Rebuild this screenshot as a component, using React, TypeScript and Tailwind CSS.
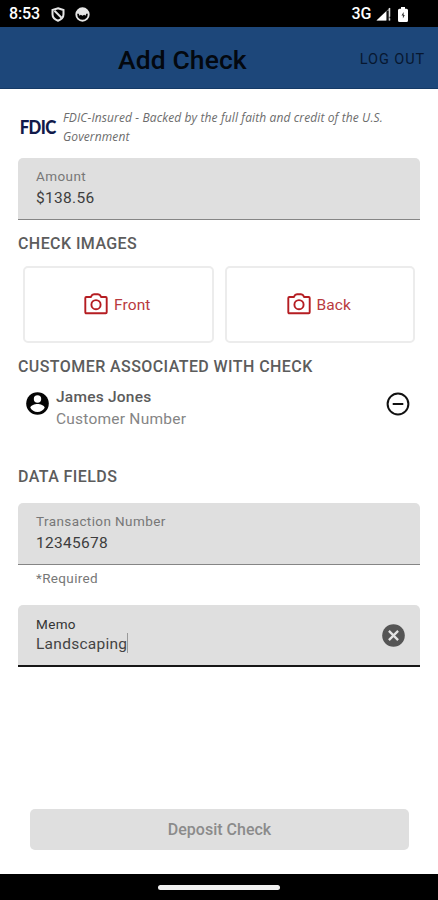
import type { ReactNode } from "react";

function ShieldIcon() {
  return (
    <svg className="h-[15px] w-[14px]" viewBox="0 0 14 15" fill="none" stroke="#e6e6e6" strokeWidth="2">
      <path d="M7 1.2 12.5 3v4.3c0 3-2.2 5.2-5.5 6.5-3.300-1.300-5.500-3.500-5.500-6.500V3z" />
      <path d="m3.500 3.800 7 7" />
    </svg>
  );
}

function FaceIcon() {
  return (
    <svg className="h-[15px] w-[15px]" viewBox="0 0 15 15">
      <circle cx="7.500" cy="7.500" r="6.200" fill="none" stroke="#e6e6e6" strokeWidth="1.900" />
      <path d="M1.500 6.500C2 3 4.500 1.300 7.500 1.300s5.500 1.700 6 5.200l-2.200.3-.8 1.900-1.300-.9-1.700 1-1.700-1-1.300.9-.8-1.900z" fill="#e6e6e6" />
    </svg>
  );
}

function SignalIcon() {
  return (
    <svg className="h-[14px] w-[15px]" viewBox="0 0 15 14">
      <path d="M.5 13.500 14 .5v13z" fill="#777" />
      <path d="M.5 13.500 10 4.400v9.100z" fill="#fff" />
      <path d="M13.500 1v8.700M13.500 11.300v2.200" stroke="#ddd" strokeWidth="1.500" />
      <path d="M11.800 4v10" stroke="#000" strokeWidth="1.300" />
    </svg>
  );
}

function BatteryIcon() {
  return (
    <svg className="h-[15px] w-[10px]" viewBox="0 0 10 15">
      <path d="M3 0h4v1.700h1.500q1.500 0 1.500 1.500v10.300q0 1.500-1.500 1.500h-7Q0 15 0 13.500V3.200q0-1.500 1.500-1.500H3z" fill="#fff" />
      <path d="M5.600 5 3.500 8.600h1.400v2.900l1.900-3.600H5.600z" fill="#333" />
    </svg>
  );
}

function CameraIcon() {
  return (
    <svg className="h-[22px] w-[24px] shrink-0" viewBox="0 0 24 22" fill="none" stroke="#b51d22" strokeWidth="1.900" strokeLinejoin="round">
      <path d="M2.300 4h4.500q1.300-2.700 3.200-2.700h4q1.900 0 3.200 2.700h4.500q1 0 1 1v14.300q0 1-1 1H2.300q-1 0-1-1V5q0-1 1-1z" />
      <circle cx="12" cy="11.700" r="4.600" />
    </svg>
  );
}

function PersonIcon() {
  return (
    <svg className="h-[23px] w-[23px] shrink-0" viewBox="0 0 23 23">
      <circle cx="11.500" cy="11.500" r="11.300" fill="#050505" />
      <circle cx="11.500" cy="7" r="3.700" fill="#fff" />
      <path d="M4.300 15.800c.6-2.500 4.300-3.700 7.200-3.700s6.600 1.200 7.200 3.700c-1.400 2.500-4 4.300-7.200 4.300s-5.800-1.800-7.200-4.300z" fill="#fff" />
    </svg>
  );
}

function MinusIcon() {
  return (
    <svg className="h-[24px] w-[24px]" viewBox="0 0 24 24" fill="none" stroke="#111" strokeWidth="2">
      <circle cx="12" cy="12" r="10.400" />
      <path d="M6.700 12h10.600" />
    </svg>
  );
}

function ClearIcon() {
  return (
    <svg className="h-[23px] w-[23px]" viewBox="0 0 23 23">
      <circle cx="11.500" cy="11.500" r="11.300" fill="#555" />
      <path d="m6.900 6.900 9.200 9.200m0-9.200-9.200 9.200" stroke="#e4e4e4" strokeWidth="2.300" />
    </svg>
  );
}

function CheckSide({ label }: { label: string }) {
  return (
    <button className="flex h-[77px] flex-1 items-center justify-center gap-[6px] rounded-[5px] border-2 border-[#ececec] pr-[2px] pb-px text-[15.5px] leading-5 tracking-[0.1px] text-[#b93a3e]">
      <CameraIcon />
      <span className="pt-[2px]">{label}</span>
    </button>
  );
}

function Heading({ children, className }: { children: ReactNode; className: string }) {
  return <h2 className={"whitespace-nowrap text-[16px] leading-5 font-medium tracking-[0.420px] text-[#5c5c5c] " + className}>{children}</h2>;
}

function FilledField({ label, value, className }: { label: string; value: string; className: string }) {
  return (
    <div className={"flex h-[62px] flex-col rounded-t-[5px] border-b border-[#858585] bg-[#dfdfdf] px-[18px] pt-[8px] " + className}>
      <label className="text-[13.5px] leading-5 tracking-[0.400px] text-[#777]">{label}</label>
      <span className="pt-px text-[15.5px] leading-[23px] tracking-[0.300px] text-[#3d3d3d]">{value}</span>
    </div>
  );
}

export default function App() {
  return (
    <div className="flex h-[900px] w-[438px] flex-col overflow-hidden bg-white font-['Roboto',sans-serif]">
      <div className="flex h-[27px] shrink-0 items-center bg-black pt-px pr-[30px] pl-[9px] text-white">
        <span className="w-[42px] text-[16px] leading-none font-medium tracking-[-0.1px]">8:53</span>
        <div className="flex gap-[10px]">
          <ShieldIcon />
          <FaceIcon />
        </div>
        <span className="ml-auto text-[16px] leading-none font-medium tracking-[-0.3px]">3G</span>
        <div className="ml-[5px] flex items-center gap-[7px]">
          <SignalIcon />
          <BatteryIcon />
        </div>
      </div>

      <header className="grid h-[62px] shrink-0 grid-cols-[118px_1fr_auto] items-center border-b border-[#153a66] bg-[#1d477a] pt-[4px] pr-[13px] text-[#03080f]">
        <h1 className="col-start-2 text-[26.5px] leading-8 font-medium tracking-[0.1px]">Add Check</h1>
        <button className="text-[14.5px] tracking-[0.900px] text-[#071730]">LOG OUT</button>
      </header>

      <main className="flex flex-1 flex-col px-[18px]">
        <div className="mt-[19px] flex h-[38px] items-center">
          <span className="w-[45px] origin-left scale-x-[0.86] pl-[2px] font-['Lato',sans-serif] text-[19.5px] leading-none font-black tracking-[-0.700px] text-[#111a4a]">
            FDIC
          </span>
          <p className="font-['Open_Sans',sans-serif] text-[12px] leading-[19px] tracking-[0.115px] whitespace-nowrap text-[#6c6c6c] italic">
            FDIC-Insured - Backed by the full faith and credit of the U.S.
            <br />
            Government
          </p>
        </div>

        <FilledField className="mt-[12px]" label="Amount" value="$138.56" />

        <Heading className="mt-[14px]">CHECK IMAGES</Heading>
        <div className="mt-[12px] flex gap-[11px] px-[5px]">
          <CheckSide label="Front" />
          <CheckSide label="Back" />
        </div>

        <Heading className="mt-[14px]">CUSTOMER ASSOCIATED WITH CHECK</Heading>
        <div className="mt-[10px] flex h-[44px] pr-[10px] pl-[8px]">
          <div className="pt-[5px]">
            <PersonIcon />
          </div>
          <div className="ml-[7px] flex flex-col text-[15.5px] tracking-[0.230px]">
            <span className="leading-[21px] font-medium text-[#5b5b5b]">James Jones</span>
            <span className="leading-[22px] text-[#858585]">Customer Number</span>
          </div>
          <button className="mt-[5px] ml-auto self-start">
            <MinusIcon />
          </button>
        </div>

        <Heading className="mt-[36px]">DATA FIELDS</Heading>
        <FilledField className="mt-[16px]" label="Transaction Number" value="12345678" />
        <p className="mt-[3px] pl-[18px] text-[13.5px] leading-5 tracking-[0.350px] text-[#777]">*Required</p>

        <div className="mt-[17px] flex h-[62px] items-center justify-between rounded-t-[5px] border-b-2 border-[#161616] bg-[#dfdfdf] pr-[15px] pl-[18px]">
          <div className="flex flex-col">
            <label className="text-[13.5px] leading-[18px] tracking-[0.350px] text-[#333]">Memo</label>
            <span className="flex text-[15.5px] leading-[23px] tracking-[0.270px] text-[#444]">
              Landscaping
              <i className="h-5 w-px bg-[#999]" />
            </span>
          </div>
          <ClearIcon />
        </div>

        <button className="mr-[11px] ml-[12px] mt-auto mb-[24px] h-[41px] rounded-[5px] bg-[#dfdfdf] text-[16px] font-medium text-[#8b8b8b]">Deposit Check</button>
      </main>

      <footer className="flex h-[26px] shrink-0 items-center justify-center bg-black">
        <div className="h-[5px] w-[122px] rounded-full bg-[#f0f0f0]" />
      </footer>
    </div>
  );
}
